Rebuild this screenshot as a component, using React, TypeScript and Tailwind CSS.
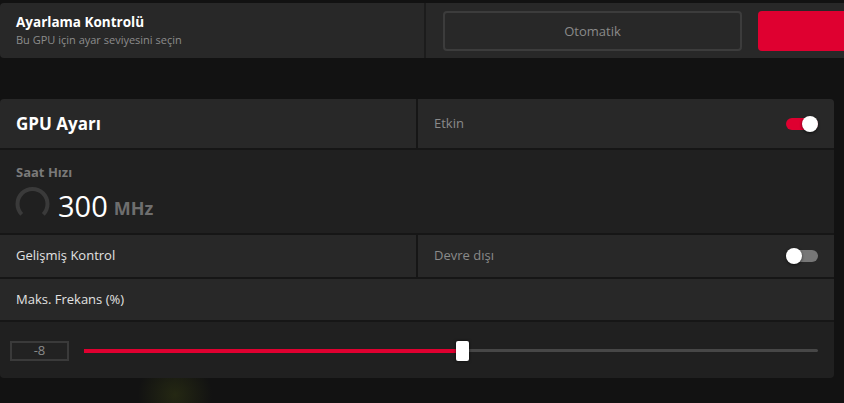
export default function App() {
  const font = { fontFamily: '"Open Sans", "Noto Sans", sans-serif' }
  const value = 51.5 // percent of the track that is filled

  return (
    <div className="w-[844px] h-[403px] bg-[#121212] overflow-hidden pt-[3px] relative" style={font}>
      {/* faint glow under the panel */}
      <div className="absolute left-[130px] top-[360px] w-[90px] h-[70px] rounded-full bg-[radial-gradient(circle,rgba(70,80,20,0.35),transparent_65%)]" />

      {/* Tuning control bar */}
      <div className="w-[900px] h-[55px] flex bg-[#282828] rounded-[4px]">
        <div className="w-[424px] shrink-0 flex flex-col justify-center pl-4">
          <div className="text-[13.5px] font-bold text-white leading-[18px]">Ayarlama Kontrolü</div>
          <div className="text-[11px] text-[#8c8c8c] leading-[16px] mt-[1px]">Bu GPU için ayar seviyesini seçin</div>
        </div>
        <div className="w-[2px] shrink-0 bg-[#1c1c1c]" />
        <div className="flex-1 flex items-center pl-[17px]">
          <div className="w-[299px] shrink-0 h-[40px] border-2 border-[#3c3c3c] rounded-[4px] flex items-center justify-center pt-[2px] text-[13px] text-[#8a8a8a]">
            Otomatik
          </div>
          <div className="ml-[16px] w-[120px] shrink-0 h-[40px] rounded-[4px] bg-[#df0030]" />
        </div>
      </div>

      {/* GPU settings panel */}
      <div className="mt-[41px] w-[834px] rounded-[4px] overflow-hidden bg-[#161616] flex flex-col gap-[2px] relative">
        <div className="h-[49px] flex gap-[2px]">
          <div className="w-[416px] bg-[#282828] flex items-center pl-4 text-[17px] font-bold text-white">GPU Ayarı</div>
          <div className="flex-1 bg-[#282828] flex items-center justify-between px-4">
            <span className="text-[13px] text-[#8a8a8a]">Etkin</span>
            <Toggle on />
          </div>
        </div>

        <div className="h-[83px] bg-[#202020] pl-4 pt-[13px]">
          <div className="text-[13px] font-bold text-[#7a7a7a] leading-[18px]">Saat Hızı</div>
          <div className="flex items-center mt-[5px] -ml-[1px]">
            <svg width="35" height="35" viewBox="0 0 35 35">
              <path d="M6.7 28.3 A15 15 0 1 1 28.3 28.3" fill="none" stroke="#3a3a3a" strokeWidth="4" />
            </svg>
            <span className="ml-[8px] mt-[4px] text-[29px] text-white leading-none">300</span>
            <span className="ml-[6px] mt-[9px] text-[18px] font-bold text-[#6e6e6e] leading-none">MHz</span>
          </div>
        </div>

        <div className="h-[42px] flex gap-[2px]">
          <div className="w-[416px] bg-[#282828] flex items-center pl-4 text-[13px] text-[#e2e2e2]">Gelişmiş Kontrol</div>
          <div className="flex-1 bg-[#282828] flex items-center justify-between px-4">
            <span className="text-[13px] text-[#8a8a8a]">Devre dışı</span>
            <Toggle on={false} />
          </div>
        </div>

        <div className="h-[41px] bg-[#282828] flex items-center pl-4 text-[13px] text-[#e2e2e2]">Maks. Frekans (%)</div>

        <div className="h-[56px] bg-[#202020] flex items-center pl-[10px] pr-4 pt-[1px]">
          <div className="w-[59px] h-[20px] border-2 border-[#3a3a3a] bg-[#222222] flex items-center justify-center text-[13px] text-[#8a8a8a] leading-none">
            -8
          </div>
          <div className="ml-[15px] flex-1 h-[20px] relative flex items-center">
            <div className="w-full h-[3px] bg-[#474747] rounded-full" />
            <div className="absolute left-0 h-[4px] bg-[#df0030]" style={{ width: `${value}%` }} />
            <div
              className="absolute w-[13px] h-[20px] bg-white rounded-[2px] shadow-[0_0_3px_rgba(0,0,0,0.8)]"
              style={{ left: `calc(${value}% - 6px)` }}
            />
          </div>
        </div>
      </div>
    </div>
  )
}

function Toggle({ on }: { on: boolean }) {
  return (
    <div className="relative w-[32px] h-[16px] flex items-center">
      <div className={on ? 'w-full h-[12px] rounded-full bg-[#df0030]' : 'w-full h-[12px] rounded-full bg-[#777777]'} />
      <div
        className={
          on
            ? 'absolute right-0 w-[16px] h-[16px] rounded-full bg-white shadow-[0_1px_3px_rgba(0,0,0,0.6)]'
            : 'absolute left-0 w-[16px] h-[16px] rounded-full bg-white shadow-[0_1px_3px_rgba(0,0,0,0.6)]'
        }
      />
    </div>
  )
}
